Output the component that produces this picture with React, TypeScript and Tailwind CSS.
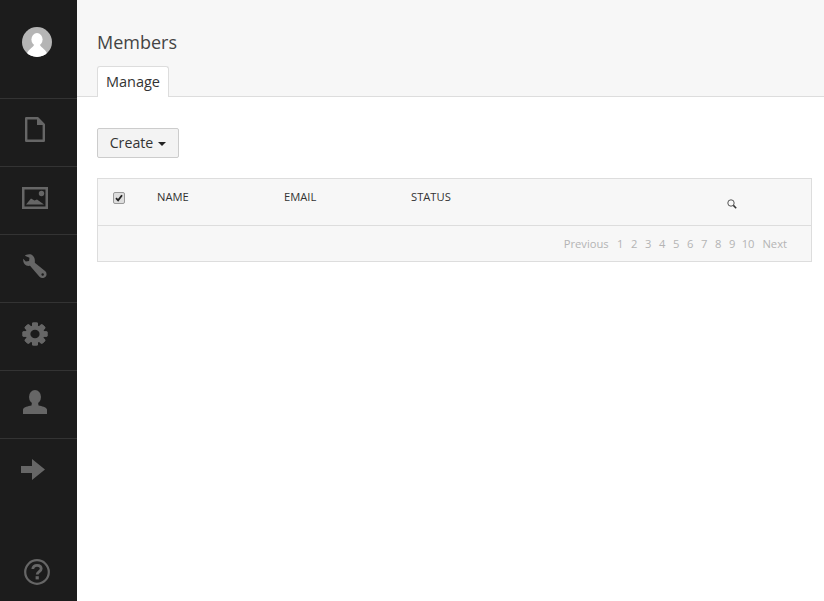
import React from "react";

const PAGES = ["1", "2", "3", "4", "5", "6", "7", "8", "9", "10"];

function Avatar() {
  return (
    <svg width="30" height="30" viewBox="0 0 30 30">
      <defs>
        <clipPath id="av"><circle cx="15" cy="15" r="15" /></clipPath>
      </defs>
      <circle cx="15" cy="15" r="15" fill="#b5b5b5" />
      <g clipPath="url(#av)" fill="#fff">
        <ellipse cx="15" cy="12.5" rx="5.6" ry="6.5" />
        <path d="M12 18 L18 18 C19 21 25 22 26 30 L4 30 C5 22 11 21 12 18Z" />
      </g>
    </svg>
  );
}

function FileIcon() {
  return (
    <svg width="20" height="25" viewBox="0 0 20 25" fill="none">
      <path d="M1.2 1.2 H12.5 L18.8 7.5 V23.8 H1.2 Z" stroke="#666" strokeWidth="2.4" strokeLinejoin="round" />
      <path d="M12 0 L20 8 H12 Z" fill="#666" />
    </svg>
  );
}

function ImageIcon() {
  return (
    <svg width="26" height="22" viewBox="0 0 26 22">
      <path fillRule="evenodd" fill="#666" d="M0 0 H26 V22 H0 Z M2.5 2.5 V19.5 H23.5 V2.5 Z" />
      <circle cx="19.5" cy="6.5" r="2.7" fill="#666" />
      <path fill="#666" d="M4 17.5 L9 11.5 L12.5 13.5 L15 12.5 L22 17.5 Z" />
    </svg>
  );
}

function WrenchIcon() {
  return (
    <svg width="24" height="24" viewBox="0 0 26 26">
      <path
        fill="#666"
        d="M9 0.5 C5.5 -0.3 2.8 1 2 1.8 L7 4 L6.6 7.6 L3 8.2 L0.3 5.2 C-0.2 8 1 11 3.6 12.4 C5 13 6.4 13 7.6 12.8 L17.6 24.4 C19.4 26.4 22.4 26.6 24.2 25 C26 23.2 26 20.4 24.2 18.8 L12.8 9.4 C13 7 12.8 4.8 11.6 3 C11 1.8 10 1 9 0.5 Z"
      />
      <circle cx="21.3" cy="22.2" r="1.3" fill="#1c1c1c" />
    </svg>
  );
}

function GearIcon() {
  const teeth = [0, 45, 90, 135, 180, 225, 270, 315];
  return (
    <svg width="26" height="24" viewBox="0 0 26 26" preserveAspectRatio="none">
      {teeth.map((a) => (
        <rect key={a} x="10" y="0.5" width="6" height="25" rx="1.5" fill="#666" transform={`rotate(${a} 13 13)`} />
      ))}
      <circle cx="13" cy="13" r="9.5" fill="#666" />
      <circle cx="13" cy="13" r="4.6" fill="#1c1c1c" />
    </svg>
  );
}

function UserIcon() {
  return (
    <svg width="24" height="24" viewBox="0 0 24 24">
      <ellipse cx="12" cy="7" rx="6" ry="7" fill="#666" />
      <path fill="#666" d="M9 12 H15 L15.5 15.6 C19 16.4 23 17 24 19.5 V24 H0 V19.5 C1 17 5 16.4 8.5 15.6 Z" />
    </svg>
  );
}

function ArrowIcon() {
  return (
    <svg width="24" height="21" viewBox="0 0 24 21">
      <path fill="#666" d="M0 7 H11 V0 L24 10.5 L11 21 V14 H0 Z" />
    </svg>
  );
}

function HelpIcon() {
  return (
    <svg width="26" height="26" viewBox="0 0 26 26" fill="none">
      <circle cx="13" cy="13" r="11.8" stroke="#666" strokeWidth="2.2" />
      <path d="M8.8 10 C8.8 7.6 10.6 6.4 13 6.4 C15.6 6.4 17.2 7.8 17.2 9.8 C17.2 12.6 13.2 12.8 13.2 15.6" stroke="#666" strokeWidth="2.8" />
      <rect x="11.6" y="17.2" width="3.2" height="3.2" fill="#666" />
    </svg>
  );
}

function SearchIcon() {
  return (
    <svg width="10" height="10" viewBox="0 0 10 10" fill="none">
      <circle cx="4" cy="4" r="3.2" stroke="#444" strokeWidth="0.9" />
      <path d="M6.4 6.4 L9.2 9.2" stroke="#333" strokeWidth="1.5" />
    </svg>
  );
}

function CheckMark() {
  return (
    <svg width="8" height="8" viewBox="0 0 8 8" fill="none">
      <path d="M1 4.2 L3.1 6.4 L7 1.2" stroke="#222" strokeWidth="1.8" />
    </svg>
  );
}

const NAV = [
  { icon: <FileIcon />, cls: "pr-[7px]" },
  { icon: <ImageIcon />, cls: "pr-[7px]" },
  { icon: <WrenchIcon />, cls: "pr-[7px]" },
  { icon: <GearIcon />, cls: "pr-[7px]" },
  { icon: <UserIcon />, cls: "pr-[7px]" },
  { icon: <ArrowIcon />, cls: "pr-[11px]" },
];

export default function App() {
  return (
    <div className="flex h-[601px] w-[824px] overflow-hidden bg-white font-['Open_Sans',sans-serif] text-[#333]">
      {/* Sidebar */}
      <aside className="flex w-[77px] shrink-0 flex-col bg-[#1c1c1c]">
        <div className="flex h-[98px] justify-center pr-[3px] pt-[27px]">
          <div className="h-[30px]"><Avatar /></div>
        </div>
        {NAV.map((item, i) => (
          <div key={i} className={`flex h-[68px] items-center justify-center border-t border-[#333] pb-[6px] ${item.cls}`}>
            {item.icon}
          </div>
        ))}
        <div className="mt-auto flex justify-center pb-4 pr-[3px]"><HelpIcon /></div>
      </aside>

      <main className="flex-1">
        {/* Header */}
        <header className="h-[97px] border-b border-[#ddd] bg-[#f7f7f7] pl-5 pt-[30px]">
          <h1 className="text-[18px] leading-[25px] text-[#444]">Members</h1>
          <div className="mt-[11px] flex h-[31px] w-[72px] items-center justify-center rounded-t-[3px] border border-b-0 border-[#ddd] bg-white text-[14.5px] text-[#333]">
            Manage
          </div>
        </header>

        <div className="pl-5 pr-3 pt-[31px]">
          <button className="flex h-[30px] w-[82px] items-center justify-center gap-[5px] rounded-[2px] border border-[#ccc] bg-[#f3f3f3] text-[14.2px] text-[#333]">
            Create
            <span className="mt-0.5 h-0 w-0 border-x-4 border-t-4 border-x-transparent border-t-[#222]" />
          </button>

          {/* Table */}
          <div className="mt-5 h-[84px] border border-[#ddd] bg-[#f7f7f7]">
            <div className="relative flex h-[47px] items-start border-b border-[#ddd] pt-[10px] text-[11.2px] leading-[15px] text-[#333]">
              <div className="ml-[15px] mt-[3px] flex h-3 w-3 items-center justify-center rounded-[2px] border border-[#999] bg-[#ddd]">
                <CheckMark />
              </div>
              <div className="ml-[32px] w-[127px]">NAME</div>
              <div className="w-[127px]">EMAIL</div>
              <div>STATUS</div>
              <div className="absolute left-[629px] top-5"><SearchIcon /></div>
            </div>
            <div className="flex h-[35px] items-center justify-end gap-[5px] pr-6 pt-[2px] text-[11.2px] text-[#b4b4b4]">
              <span className="mr-[2px]">Previous</span>
              {PAGES.map((p) => (
                <span key={p} className="min-w-[9px] text-center">{p}</span>
              ))}
              <span className="ml-[3px]">Next</span>
            </div>
          </div>
        </div>
      </main>
    </div>
  );
}
